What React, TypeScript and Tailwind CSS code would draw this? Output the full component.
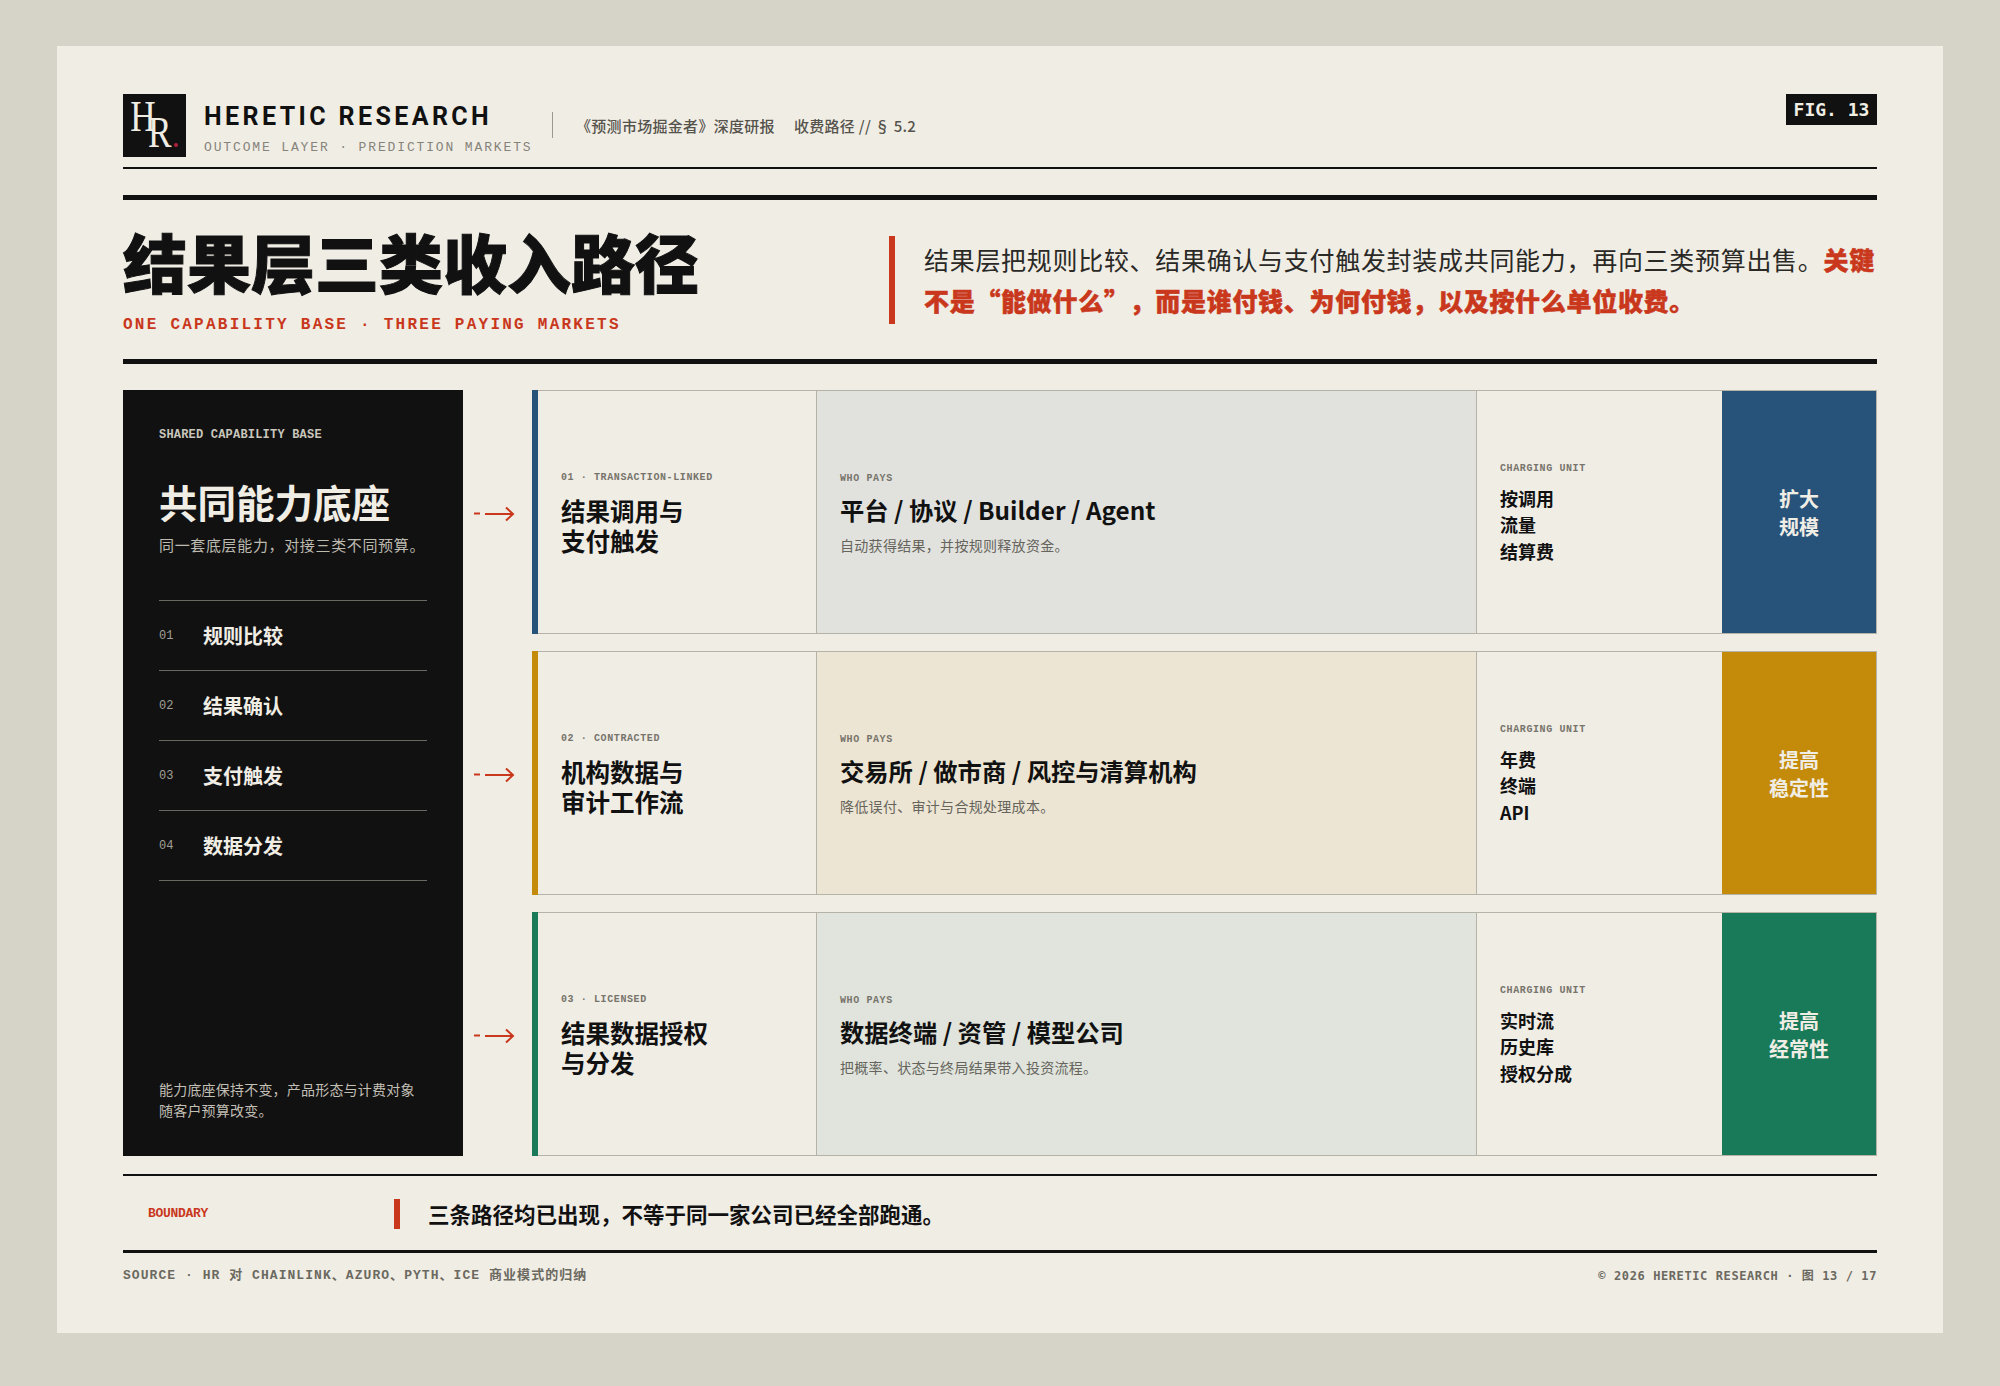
import React from 'react';

const MONO = "font-['Liberation_Mono','Noto_Sans_CJK_SC',monospace]";

const rows = [
  {
    tag: '01 · TRANSACTION-LINKED',
    name: ['结果调用与', '支付触发'],
    who: '平台 / 协议 / Builder / Agent',
    desc: '自动获得结果，并按规则释放资金。',
    units: ['按调用', '流量', '结算费'],
    goal: ['扩大', '规模'],
    accent: 'bg-[#27527a]',
    tint: 'bg-[#e1e2de]',
  },
  {
    tag: '02 · CONTRACTED',
    name: ['机构数据与', '审计工作流'],
    who: '交易所 / 做市商 / 风控与清算机构',
    desc: '降低误付、审计与合规处理成本。',
    units: ['年费', '终端', 'API'],
    goal: ['提高', '稳定性'],
    accent: 'bg-[#c48a0a]',
    tint: 'bg-[#ece5d3]',
  },
  {
    tag: '03 · LICENSED',
    name: ['结果数据授权', '与分发'],
    who: '数据终端 / 资管 / 模型公司',
    desc: '把概率、状态与终局结果带入投资流程。',
    units: ['实时流', '历史库', '授权分成'],
    goal: ['提高', '经常性'],
    accent: 'bg-[#187a58]',
    tint: 'bg-[#e0e4dc]',
  },
];

const capabilities = ['规则比较', '结果确认', '支付触发', '数据分发'];

const Logo = () => (
  <div className="relative w-[63px] h-[63px] bg-[#111] shrink-0 font-['Liberation_Serif',serif] text-[#efece4]">
    <span className="absolute left-[4px] top-[0px] text-[44px] leading-[46px] scale-x-[0.8]">H</span>
    <span className="absolute left-[22px] top-[16px] text-[44px] leading-[46px] scale-x-[0.8]">R</span>
    <span className="absolute left-[51px] top-[49px] w-[4px] h-[4px] rounded-full bg-[#b0203c]" />
  </div>
);

const Arrow = () => (
  <svg width="42" height="16" viewBox="0 0 42 16" fill="none" stroke="#c9381c" strokeWidth="2">
    <path d="M1 7.5h6" />
    <path d="M12 8h28" />
    <path d="M33 1.5l7 6.5-7 6.5" />
  </svg>
);

const Label = ({ text }: { text: string }) => (
  <div className={`${MONO} text-[10px] leading-[14px] font-bold tracking-[0.6px] text-[#77746b]`}>{text}</div>
);

export default function App() {
  return (
    <div className="w-[2000px] h-[1386px] bg-[#d6d4c8] pt-[46px] pl-[57px] font-['Noto_Sans_CJK_SC',sans-serif] text-[#111] overflow-hidden [text-spacing-trim:space-all]">
      <div className="w-[1886px] h-[1287px] bg-[#f0ede5] px-[66px] pt-[48px]">
        {/* Masthead */}
        <header className="h-[75px] border-b-2 border-[#111] flex items-start justify-between">
          <div className="flex items-start">
            <Logo />
            <div className="ml-[18px] w-[330px]">
              <div className="font-['Roboto',sans-serif] text-[25px] leading-[30px] mt-[8px] font-bold tracking-[3.4px] whitespace-nowrap">HERETIC RESEARCH</div>
              <div className={`${MONO} text-[13px] leading-[16px] mt-[8px] tracking-[1.86px] text-[#86837a] whitespace-nowrap`}>OUTCOME LAYER · PREDICTION MARKETS</div>
            </div>
            <div className="ml-[18px] mt-[18px] w-px h-[26px] bg-[#9b988e]" />
            <div className="ml-[23px] mt-[21px] text-[15px] leading-[22px] tracking-[0.3px] font-medium text-[#55534c] flex gap-[19px] whitespace-nowrap">
              <span>《预测市场掘金者》深度研报</span>
              <span>收费路径 // § 5.2</span>
            </div>
          </div>
          <div className="font-['DejaVu_Sans_Mono',monospace] w-[91px] h-[31px] bg-[#111] text-[#f0ede5] text-[18px] font-bold leading-[31px] text-center">FIG. 13</div>
        </header>

        {/* Title band */}
        <section className="mt-[26px] h-[169px] border-y-[5px] border-[#111] flex items-center">
          <div className="w-[766px] shrink-0 mb-[3px]">
            <h1 className="text-[64px] leading-[76px] font-black whitespace-nowrap [-webkit-text-stroke:1px_#111]">结果层三类收入路径</h1>
            <div className={`${MONO} text-[16px] leading-[20px] mt-[17px] font-bold tracking-[2.25px] text-[#c9381c] whitespace-nowrap`}>ONE CAPABILITY BASE · THREE PAYING MARKETS</div>
          </div>
          <div className="border-l-[6px] border-[#c9381c] pl-[29px] h-[88px] flex items-center">
            <p className="text-[25px] leading-[41px] tracking-[0.7px] text-[#2a2925] whitespace-nowrap">
              结果层把规则比较、结果确认与支付触发封装成共同能力，再向三类预算出售。<strong className="font-black text-[#c9381c] [-webkit-text-stroke:0.5px_#c9381c]">关键</strong>
              <br />
              <strong className="font-black text-[#c9381c] [-webkit-text-stroke:0.5px_#c9381c]">不是“能做什么”，而是谁付钱、为何付钱，以及按什么单位收费。</strong>
            </p>
          </div>
        </section>

        {/* Main */}
        <main className="mt-[26px] h-[766px] flex">
          <aside className="w-[340px] shrink-0 bg-[#111] px-[36px] pt-[37px] pb-[36px] flex flex-col text-[#f0ede5]">
            <div className={`${MONO} text-[12px] leading-[16px] font-bold tracking-[0.2px] text-[#c9c6bc]`}>SHARED CAPABILITY BASE</div>
            <div className="text-[38.5px] leading-[50px] font-bold mt-[33px]">共同能力底座</div>
            <div className="text-[15px] leading-[22px] mt-[8px] tracking-[0.65px] text-[#bdbab0] whitespace-nowrap">同一套底层能力，对接三类不同预算。</div>
            <ul className="mt-[44px] border-t border-[#6a6862]">
              {capabilities.map((c, i) => (
                <li key={c} className="h-[70px] border-b border-[#6a6862] flex items-center">
                  <span className={`${MONO} text-[12px] w-[44px] text-[#a3a097]`}>0{i + 1}</span>
                  <span className="text-[20px] font-bold">{c}</span>
                </li>
              ))}
            </ul>
            <p className="mt-auto text-[14px] leading-[20.5px] tracking-[0.2px] text-[#c2bfb5] whitespace-nowrap">
              能力底座保持不变，产品形态与计费对象
              <br />
              随客户预算改变。
            </p>
          </aside>

          <div className="flex-1 flex flex-col gap-[17px]">
            {rows.map((r) => (
              <div key={r.tag} className="flex-1 flex items-stretch">
                <div className="w-[69px] shrink-0 flex items-center justify-center pr-[7px] pt-[4px]">
                  <Arrow />
                </div>
                <div className="flex-1 flex border border-[#b5b2a8] relative">
                  <div className={`w-[6px] shrink-0 -my-px -ml-px ${r.accent}`} />
                  <div className="w-[279px] shrink-0 pl-[23px] pt-[2px] flex flex-col justify-center border-r border-[#b5b2a8]">
                    <Label text={r.tag} />
                    <div className="text-[24.5px] leading-[30px] font-bold mt-[11px] whitespace-nowrap">
                      {r.name.map((n) => <div key={n}>{n}</div>)}
                    </div>
                  </div>
                  <div className={`w-[660px] shrink-0 pl-[23px] pt-[2px] flex flex-col justify-center border-r border-[#b5b2a8] ${r.tint}`}>
                    <Label text="WHO PAYS" />
                    <div className="text-[24.3px] leading-[36px] font-bold mt-[6px]">{r.who}</div>
                    <div className="text-[14px] leading-[20px] mt-[7px] tracking-[0.3px] text-[#66645c]">{r.desc}</div>
                  </div>
                  <div className="w-[245px] shrink-0 pl-[23px] pt-[2px] flex flex-col justify-center">
                    <Label text="CHARGING UNIT" />
                    <div className="text-[18px] leading-[26.5px] font-bold mt-[9px]">
                      {r.units.map((u) => <div key={u}>{u}</div>)}
                    </div>
                  </div>
                  <div className={`flex-1 flex flex-col items-center justify-center pt-[2px] text-[20px] leading-[28px] font-bold text-[#f0ede5] ${r.accent}`}>
                    {r.goal.map((g) => <div key={g}>{g}</div>)}
                  </div>
                </div>
              </div>
            ))}
          </div>
        </main>

        {/* Boundary */}
        <section className="mt-[18px] h-[79px] border-t-2 border-b-[3px] border-[#111] flex items-center pt-[2px]">
          <div className="w-[271px] shrink-0 pl-[25px] font-['Liberation_Sans_Narrow','Liberation_Mono',monospace] text-[13px] font-bold text-[#c9381c] tracking-[-0.3px]">BOUNDARY</div>
          <div className="border-l-[6px] border-[#c9381c] pl-[28px] h-[30px] flex items-center text-[21.5px] font-bold whitespace-nowrap">
            三条路径均已出现，不等于同一家公司已经全部跑通。
          </div>
        </section>

        <footer className="mt-[14px] flex items-center justify-between text-[#6b6960]">
          <div className={`${MONO} text-[13px] leading-[18px] tracking-[1.05px] font-bold`}>SOURCE · HR 对 CHAINLINK、AZURO、PYTH、ICE 商业模式的归纳</div>
          <div className="font-['DejaVu_Sans_Mono','Noto_Sans_CJK_SC',monospace] text-[12px] leading-[18px] tracking-[0.6px] font-bold">© 2026 HERETIC RESEARCH · 图 13 / 17</div>
        </footer>
      </div>
    </div>
  );
}
